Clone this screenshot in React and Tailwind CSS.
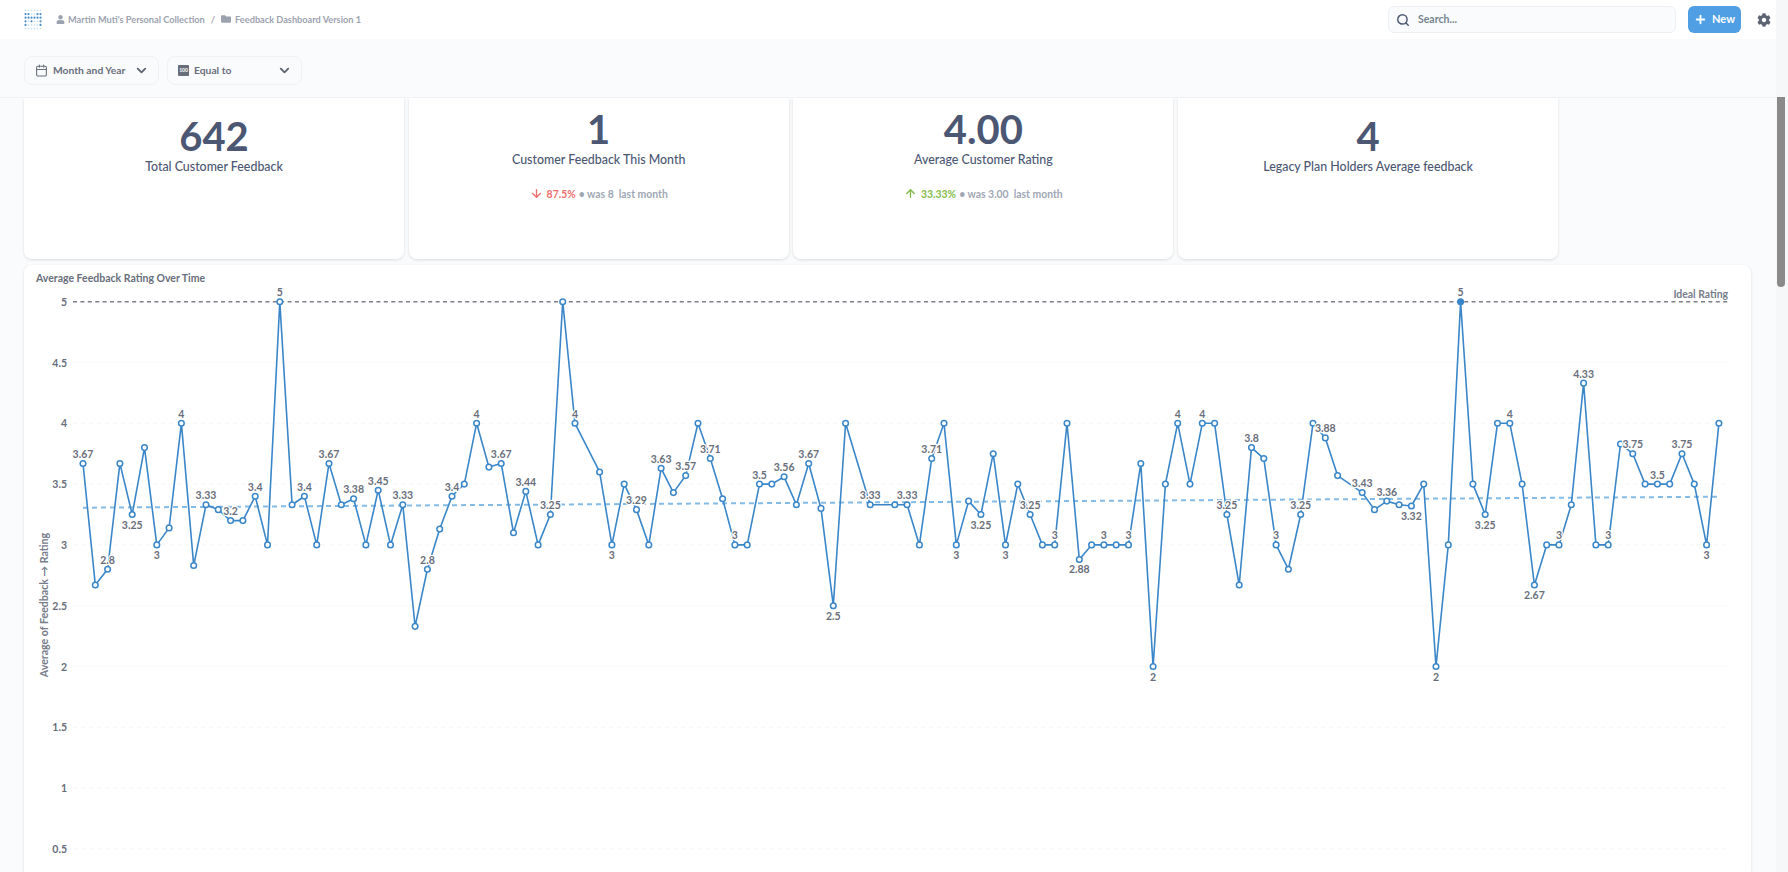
import React from 'react';
import { ArrowDown, ArrowUp, Calendar, ChevronDown, Plus, Search } from 'lucide-react';
import { FaCog, FaFolder, FaUser } from 'react-icons/fa';

// [x index, value, label position]
const points = [
  [0, 3.67, 'a'], [1, 2.67], [2, 2.8, 'a'], [3, 3.67], [4, 3.25, 'b'], [5, 3.8], [6, 3, 'b'], [7, 3.14], [8, 4, 'a'], [9, 2.83],
  [10, 3.33, 'a'], [11, 3.29], [12, 3.2, 'a'], [13, 3.2], [14, 3.4, 'a'], [15, 3], [16, 5, 'a'], [17, 3.33], [18, 3.4, 'a'], [19, 3],
  [20, 3.67, 'a'], [21, 3.33], [22, 3.38, 'a'], [23, 3], [24, 3.45, 'a'], [25, 3], [26, 3.33, 'a'], [27, 2.33], [28, 2.8, 'a'], [29, 3.13],
  [30, 3.4, 'a'], [31, 3.5], [32, 4, 'a'], [33, 3.64], [34, 3.67, 'a'], [35, 3.1], [36, 3.44, 'a'], [37, 3], [38, 3.25, 'a'], [39, 5],
  [40, 4, 'a'], [42, 3.6], [43, 3, 'b'], [44, 3.5], [45, 3.29, 'a'], [46, 3], [47, 3.63, 'a'], [48, 3.43], [49, 3.57, 'a'], [50, 4],
  [51, 3.71, 'a'], [52, 3.38], [53, 3, 'a'], [54, 3], [55, 3.5, 'a'], [56, 3.5], [57, 3.56, 'a'], [58, 3.33], [59, 3.67, 'a'], [60, 3.3],
  [61, 2.5, 'b'], [62, 4], [64, 3.33, 'a'], [66, 3.33], [67, 3.33, 'a'], [68, 3], [69, 3.71, 'a'], [70, 4], [71, 3, 'b'], [72, 3.36],
  [73, 3.25, 'b'], [74, 3.75], [75, 3, 'b'], [76, 3.5], [77, 3.25, 'a'], [78, 3], [79, 3, 'a'], [80, 4], [81, 2.88, 'b'], [82, 3],
  [83, 3, 'a'], [84, 3], [85, 3, 'a'], [86, 3.67], [87, 2, 'b'], [88, 3.5], [89, 4, 'a'], [90, 3.5], [91, 4, 'a'], [92, 4],
  [93, 3.25, 'a'], [94, 2.67], [95, 3.8, 'a'], [96, 3.71], [97, 3, 'a'], [98, 2.8], [99, 3.25, 'a'], [100, 4], [101, 3.88, 'a'], [102, 3.57],
  [104, 3.43, 'a'], [105, 3.29], [106, 3.36, 'a'], [107, 3.33], [108, 3.32, 'b'], [109, 3.5], [110, 2, 'b'], [111, 3], [112, 5, 'a'], [113, 3.5],
  [114, 3.25, 'b'], [115, 4], [116, 4, 'a'], [117, 3.5], [118, 2.67, 'b'], [119, 3], [120, 3, 'a'], [121, 3.33], [122, 4.33, 'a'], [123, 3],
  [124, 3, 'a'], [125, 3.83], [126, 3.75, 'a'], [127, 3.5], [128, 3.5, 'a'], [129, 3.5], [130, 3.75, 'a'], [131, 3.5], [132, 3, 'b'], [133, 4],
];

const ticks = [5, 4.5, 4, 3.5, 3, 2.5, 2, 1.5, 1, 0.5];
const px = (i) => 83 + i * 12.3;
const py = (v) => 301.7 + (5 - v) * 121.6;

const Logo = () => {
  const dark = ['0,1', '0,2', '0,3', '0,4', '1,1', '1,2', '2,2', '2,3', '3,2', '4,1', '4,2', '5,1', '5,2', '5,3', '5,4'];
  const dots = [];
  for (let c = 0; c < 6; c++) {
    for (let r = 0; r < 6; r++) {
      const on = dark.includes(`${c},${r}`);
      dots.push(<circle key={`${c}-${r}`} cx={1.5 + c * 3} cy={1.5 + r * 3.6} r={on ? 1.1 : 0.8} fill={on ? '#4a8fcb' : '#c4dcf0'} />);
    }
  }
  return <svg width="19" height="22" viewBox="0 0 19 22">{dots}</svg>;
};

const FilterButton = ({ icon, label, width }) => (
  <div className={`flex items-center h-[29px] rounded-lg border border-[#f0f1f4] pl-[10px] pr-[9px] ${width}`}>
    {icon}
    <span className="ml-[5px] flex-1 whitespace-nowrap text-[10.3px] font-bold text-[#696e7b]">{label}</span>
    <ChevronDown className="w-[15px] h-[15px] text-[#5e6472]" strokeWidth={3} />
  </div>
);

const StatCard = ({ value, label, top, stat }) => (
  <div className={`flex flex-col items-center w-[380px] h-[161px] bg-white rounded-b-lg shadow-[0_1px_3px_rgba(0,0,0,0.13)] ${top}`}>
    <div className="text-[40px] leading-[38px] font-bold text-[#4c5773]">{value}</div>
    <div className="mt-[3px] text-[12.4px] leading-[17px] font-medium text-[#4c5773]">{label}</div>
    {stat}
  </div>
);

const Stat = ({ up, pct, text, color }) => (
  <div className="mt-[18px] flex items-center text-[10.4px] leading-[16px] font-bold text-[#a0a7b4]">
    {up
      ? <ArrowUp className="w-[13px] h-[13px] text-[#84bb4c] mr-[4px]" strokeWidth={2.5} />
      : <ArrowDown className="w-[13px] h-[13px] text-[#ed6e6e] mr-[4px]" strokeWidth={2.5} />}
    <span className={color}>{pct}</span>
    <span className="ml-[3px] whitespace-pre">{text}</span>
  </div>
);

const Chart = () => {
  const line = points.map(([i, v]) => `${px(i)},${py(v)}`).join(' ');
  return (
    <svg className="block w-[1728px] h-[590px]" viewBox="24 282 1728 590" style={{ fontFamily: 'Lato, sans-serif' }}>
      {ticks.map((t) => (
        <g key={t}>
          {t !== 5 && <line x1="73" x2="1728" y1={py(t)} y2={py(t)} stroke="#f5f6f7" strokeDasharray="4 4" />}
          <text x="67" y={py(t) + 4} textAnchor="end" fontSize="10.5" fontWeight="700" fill="#696e7b">{t}</text>
        </g>
      ))}
      <text transform="translate(48 605) rotate(-90)" textAnchor="middle" fontSize="10.6" fontWeight="700" fill="#767c8a">Average of Feedback → Rating</text>
      <line x1="73" x2="1728" y1={py(5)} y2={py(5)} stroke="#7c7f8a" strokeWidth="1.6" strokeDasharray="4 3.4" />
      <text x="1728" y="298" textAnchor="end" fontSize="10.4" fontWeight="700" fill="#767c8a">Ideal Rating</text>
      <line x1="83" x2="1719" y1="507.7" y2="496.7" stroke="#84bbe6" strokeWidth="2" strokeDasharray="5 4" />
      <polyline points={line} fill="none" stroke="#3a86c8" strokeWidth="1.6" strokeLinejoin="round" />
      {points.map(([i, v]) => (
        <circle key={i} cx={px(i)} cy={py(v)} r="2.8" fill={i === 112 ? '#3a86c8' : '#fff'} stroke="#3a86c8" strokeWidth="1.5" />
      ))}
      {points.filter((p) => p[2]).map(([i, v, pos]) => (
        <text
          key={i}
          x={px(i)}
          y={pos === 'a' ? py(v) - 5.5 : py(v) + 14}
          textAnchor="middle"
          fontSize="10.5"
          fontWeight="700"
          fill="#696e7b"
          stroke="#fff"
          strokeWidth="2.5"
          paintOrder="stroke"
        >
          {v}
        </text>
      ))}
    </svg>
  );
};

export default function App() {
  return (
    <div className="relative flex flex-col h-[872px] overflow-hidden bg-[#f9fbfd] font-['Lato',sans-serif]">
      {/* Top bar */}
      <div className="flex items-center h-[39px] bg-white pl-[24px] pr-[15px]">
        <Logo />
        <div className="flex items-center ml-[13px] text-[9.2px] font-bold text-[#9ca2af]">
          <FaUser className="w-[9px] h-[9px] mr-[3px]" />
          <span>Martin Muti's Personal Collection</span>
          <span className="mx-[6px]">/</span>
          <FaFolder className="w-[10px] h-[10px] mr-[4px]" />
          <span>Feedback Dashboard Version 1</span>
        </div>
        <div className="ml-auto flex items-center h-[27px] w-[288px] rounded-md border border-[#eef0f3] bg-[#f9fbfc] pl-[7px]">
          <Search className="w-[14px] h-[14px] text-[#4c5773]" strokeWidth={2.5} />
          <span className="ml-[8px] text-[10.5px] font-bold text-[#74838f]">Search...</span>
        </div>
        <div className="ml-[12px] flex items-center justify-center h-[27px] w-[53px] rounded-md bg-[#509ee3] text-white text-[11px] font-bold">
          <Plus className="w-[13px] h-[13px] mr-[5px]" strokeWidth={3.5} />
          New
        </div>
        <FaCog className="ml-[16px] w-[14px] h-[14px] text-[#5e6472]" />
        <div className="w-[2px]" />
      </div>

      {/* Filters */}
      <div className="flex items-start gap-[8px] h-[59px] pt-[17px] pl-[24px] border-b border-[#f0f1f4] bg-[#f9fbfc]">
        <FilterButton
          width="w-[135px]"
          label="Month and Year"
          icon={<Calendar className="w-[13px] h-[13px] text-[#696e7b]" strokeWidth={2} />}
        />
        <FilterButton
          width="w-[135px]"
          label="Equal to"
          icon={
            <span className="flex items-center justify-center w-[11px] h-[11px] rounded-[1px] bg-[#696e7b] text-[5px] font-bold text-white">100</span>
          }
        />
      </div>

      {/* Dashboard */}
      <div className="flex-1 overflow-hidden pl-[24px]">
        <div className="flex gap-[4.7px]">
          <StatCard top="pt-[19px]" value="642" label="Total Customer Feedback" />
          <StatCard
            top="pt-[11.5px]"
            value="1"
            label="Customer Feedback This Month"
            stat={<Stat pct="87.5%" text="• was 8  last month" color="text-[#ed6e6e]" />}
          />
          <StatCard
            top="pt-[11.5px]"
            value="4.00"
            label="Average Customer Rating"
            stat={<Stat up pct="33.33%" text="• was 3.00  last month" color="text-[#84bb4c]" />}
          />
          <StatCard top="pt-[19px]" value="4" label="Legacy Plan Holders Average feedback" />
        </div>
        <div className="mt-[6px] w-[1727px] bg-white rounded-t-lg shadow-[0_1px_3px_rgba(0,0,0,0.13)]">
          <div className="h-[17px] pl-[12px] pt-[5px] text-[10.5px] leading-[16px] font-bold text-[#696e7b]">Average Feedback Rating Over Time</div>
          <Chart />
        </div>
      </div>

      {/* Scrollbar */}
      <div className="absolute right-0 top-0 bottom-0 w-[12px] bg-[#f6f7f8]">
        <div className="absolute left-[1px] top-[97px] w-[8px] h-[190px] rounded-b bg-[#8a8a8a]" />
      </div>
    </div>
  );
}
